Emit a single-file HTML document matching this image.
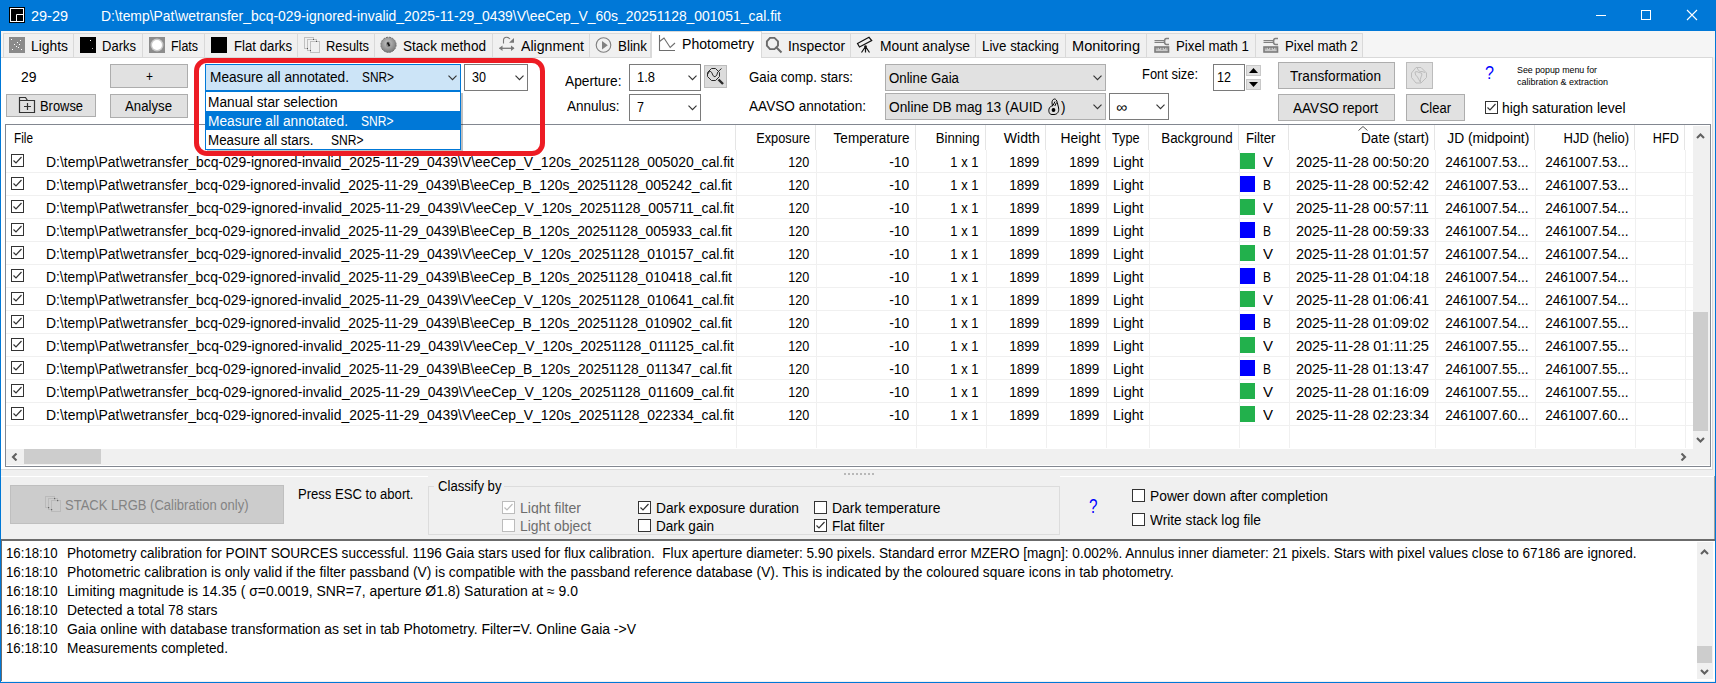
<!DOCTYPE html><html><head><meta charset="utf-8"><style>
html,body{margin:0;padding:0;}
body{width:1716px;height:683px;overflow:hidden;position:relative;background:#f0f0f0;font-family:"Liberation Sans", sans-serif;}
body>div, body>svg{position:absolute;white-space:pre;box-sizing:border-box;}
</style></head><body>
<div style="left:0px;top:0px;width:1716px;height:31px;background:#0078d7;"></div>
<svg style="left:9px;top:7px" width="16" height="16"><rect x="0" y="0" width="16" height="16" fill="#000"/><rect x="1.5" y="1.5" width="13" height="13" fill="none" stroke="#fff" stroke-width="1"/><path d="M7.5 14.5 V7.5 H14.5" fill="none" stroke="#fff" stroke-width="1"/></svg>
<div style="left:31px;top:9px;font-size:14px;line-height:14px;color:#fff;transform:scaleX(1.0332);transform-origin:left 0;">29-29</div>
<div style="left:101px;top:9px;font-size:14px;line-height:14px;color:#fff;transform:scaleX(0.9935);transform-origin:left 0;">D:\temp\Pat\wetransfer_bcq-029-ignored-invalid_2025-11-29_0439\V\eeCep_V_60s_20251128_001051_cal.fit</div>
<div style="left:1596px;top:15px;width:10px;height:1px;background:#fff;"></div>
<div style="left:1641px;top:10px;width:10px;height:10px;border:1px solid #fff;"></div>
<svg style="left:1686px;top:9px" width="12" height="12" viewBox="0 0 12 12"><path d="M1 1 L11 11 M11 1 L1 11" stroke="#fff" stroke-width="1.1"/></svg>
<div style="left:1px;top:31px;width:1714px;height:26px;background:#f5f5f5;"></div>
<div style="left:3px;top:33px;width:648px;height:24px;background:#f0f0f0;border:1px solid #d9d9d9;border-bottom:none;"></div>
<div style="left:761px;top:33px;width:602px;height:24px;background:#f0f0f0;border:1px solid #d9d9d9;border-bottom:none;"></div>
<div style="left:73px;top:33px;width:1px;height:24px;background:#d9d9d9;"></div>
<div style="left:142px;top:33px;width:1px;height:24px;background:#d9d9d9;"></div>
<div style="left:204px;top:33px;width:1px;height:24px;background:#d9d9d9;"></div>
<div style="left:297px;top:33px;width:1px;height:24px;background:#d9d9d9;"></div>
<div style="left:374px;top:33px;width:1px;height:24px;background:#d9d9d9;"></div>
<div style="left:492px;top:33px;width:1px;height:24px;background:#d9d9d9;"></div>
<div style="left:589px;top:33px;width:1px;height:24px;background:#d9d9d9;"></div>
<div style="left:850px;top:33px;width:1px;height:24px;background:#d9d9d9;"></div>
<div style="left:975px;top:33px;width:1px;height:24px;background:#d9d9d9;"></div>
<div style="left:1065px;top:33px;width:1px;height:24px;background:#d9d9d9;"></div>
<div style="left:1146px;top:33px;width:1px;height:24px;background:#d9d9d9;"></div>
<div style="left:1255px;top:33px;width:1px;height:24px;background:#d9d9d9;"></div>
<div style="left:1px;top:57px;width:1712px;height:413px;background:#fff;border:1px solid #d9d9d9;border-left:none;"></div>
<div style="left:651px;top:31px;width:111px;height:27px;background:#fff;border:1px solid #d9d9d9;border-bottom:none;"></div>
<div style="left:31px;top:39px;font-size:14px;line-height:14px;color:#000;transform:scaleX(0.9904);transform-origin:left 0;">Lights</div>
<div style="left:102px;top:39px;font-size:14px;line-height:14px;color:#000;transform:scaleX(0.9299);transform-origin:left 0;">Darks</div>
<div style="left:171px;top:39px;font-size:14px;line-height:14px;color:#000;transform:scaleX(0.8898);transform-origin:left 0;">Flats</div>
<div style="left:234px;top:39px;font-size:14px;line-height:14px;color:#000;transform:scaleX(0.9436);transform-origin:left 0;">Flat darks</div>
<div style="left:326px;top:39px;font-size:14px;line-height:14px;color:#000;transform:scaleX(0.9210);transform-origin:left 0;">Results</div>
<div style="left:403px;top:39px;font-size:14px;line-height:14px;color:#000;transform:scaleX(0.9695);transform-origin:left 0;">Stack method</div>
<div style="left:521px;top:39px;font-size:14px;line-height:14px;color:#000;transform:scaleX(1.0118);transform-origin:left 0;">Alignment</div>
<div style="left:618px;top:39px;font-size:14px;line-height:14px;color:#000;transform:scaleX(0.9552);transform-origin:left 0;">Blink</div>
<div style="left:788px;top:39px;font-size:14px;line-height:14px;color:#000;transform:scaleX(0.9897);transform-origin:left 0;">Inspector</div>
<div style="left:880px;top:39px;font-size:14px;line-height:14px;color:#000;transform:scaleX(0.9883);transform-origin:left 0;">Mount analyse</div>
<div style="left:982px;top:39px;font-size:14px;line-height:14px;color:#000;transform:scaleX(0.9514);transform-origin:left 0;">Live stacking</div>
<div style="left:1072px;top:39px;font-size:14px;line-height:14px;color:#000;transform:scaleX(1.0402);transform-origin:left 0;">Monitoring</div>
<div style="left:1176px;top:39px;font-size:14px;line-height:14px;color:#000;transform:scaleX(0.9475);transform-origin:left 0;">Pixel math 1</div>
<div style="left:1285px;top:39px;font-size:14px;line-height:14px;color:#000;transform:scaleX(0.9475);transform-origin:left 0;">Pixel math 2</div>
<div style="left:682px;top:37px;font-size:14px;line-height:14px;color:#000;transform:scaleX(1.0057);transform-origin:left 0;">Photometry</div>
<svg style="left:9px;top:37px" width="16" height="16"><rect width="16" height="16" fill="#8a8a8a"/><g fill="#fff"><rect x="2" y="2" width="1" height="1"/><rect x="11" y="3" width="1" height="1"/><rect x="8" y="5" width="1" height="1"/><rect x="5" y="7" width="1" height="1"/><rect x="10" y="7" width="1" height="1"/><rect x="7" y="9" width="1" height="1"/><rect x="3" y="12" width="1" height="1"/><rect x="12" y="12" width="1" height="1"/><rect x="9" y="10" width="1" height="1"/></g></svg>
<svg style="left:80px;top:37px" width="16" height="16"><rect width="16" height="16" fill="#000"/><rect x="10" y="3" width="1" height="1" fill="#fff"/><rect x="12" y="11" width="1" height="1" fill="#aaa"/></svg>
<svg style="left:149px;top:37px" width="16" height="16"><rect width="16" height="16" fill="#8c8c8c"/><circle cx="8" cy="8" r="6.5" fill="#c8c8c8"/><circle cx="8" cy="8" r="5" fill="#fff"/></svg>
<div style="left:211px;top:37px;width:16px;height:16px;background:#000;"></div>
<svg style="left:304px;top:37px" width="17" height="17"><g fill="#f0f0f0" stroke="#c0c0c0" stroke-width="1"><rect x="0.5" y="0.5" width="9" height="11"/><rect x="3.5" y="2.5" width="9" height="11"/><rect x="6.5" y="4.5" width="9" height="11"/></g><g fill="#555"><rect x="9" y="2" width="1" height="1"/><rect x="12" y="4" width="1" height="1"/><rect x="3" y="11" width="1" height="1"/><rect x="6" y="13" width="1" height="1"/></g></svg>
<svg style="left:380px;top:36px" width="17" height="17"><defs><radialGradient id="gs" cx="0.45" cy="0.4" r="0.6"><stop offset="0" stop-color="#c8c8c8"/><stop offset="1" stop-color="#7a7a7a"/></radialGradient></defs><circle cx="8.5" cy="8.8" r="7.6" fill="url(#gs)" stroke="#6a6a6a" stroke-width="1" stroke-dasharray="2 1"/><ellipse cx="8.3" cy="8.3" rx="2.2" ry="2.8" fill="#888"/><path d="M7.5 6.5 L9.5 10" stroke="#111" stroke-width="1.6"/></svg>
<svg style="left:498px;top:36px" width="17" height="17" fill="none" stroke="#777" stroke-width="1.1"><path d="M5.5 7.5 V4.5 Q5.5 1.3 8.5 1.3 Q10.5 1.3 12 3"/><path d="M11 6.7 L16 6.7 L16 2 Z" fill="#777" stroke="none"/><path d="M1.5 12.3 H16" stroke-width="1.3"/><path d="M1 12.3 L4.5 9.5 L4.5 15 Z M16.5 12.3 L13 9.5 L13 15 Z" fill="#777" stroke="none"/></svg>
<svg style="left:595px;top:36px" width="17" height="17"><circle cx="8.5" cy="9" r="7.3" fill="none" stroke="#7e7e7e" stroke-width="1.1"/><path d="M7 5 L12.8 9.3 L7 13.5 Z" fill="#808080"/></svg>
<svg style="left:658px;top:34px" width="18" height="18" fill="none" stroke="#6e6e6e" stroke-width="1.1"><path d="M1.5 1 V16.5 H17"/><path d="M1.5 7.5 L6 4 L12.2 13.5 L17 9"/></svg>
<svg style="left:765px;top:36px" width="18" height="18" fill="none" stroke="#6a6a6a" stroke-width="1.9"><path d="M5 1.9 H9.5 L13 5.4 V9.6 L9.5 13.1 H5 L1.9 9.6 V5.4 Z"/><path d="M11.5 11.5 L16.5 16.5" stroke-width="2"/></svg>
<svg style="left:856px;top:36px" width="18" height="18" fill="none" stroke="#111" stroke-width="1.2"><path d="M1.5 7.5 L13 1.3 L15.7 4.5 L3.5 11 Z"/><path d="M9.5 10 V16.5 M9.5 10.5 L5.5 16.5 M9.5 10.5 L13.5 16.5"/><circle cx="9.5" cy="10.5" r="1.3" fill="#111" stroke="none"/></svg>
<svg style="left:1154px;top:37px" width="17" height="16"><path d="M0.5 3.6 H10.5 M0.5 5.5 H10.5" stroke="#808080" stroke-width="1.2"/><path d="M15 1.5 H12.5 Q10.5 1.5 10.5 4.5 Q10.5 7.5 12.5 7.5 H15" fill="none" stroke="#808080" stroke-width="1.6"/><rect x="1" y="10" width="13.5" height="5" fill="#c8c8c8" stroke="#7c7c7c" stroke-width="1.6"/><path d="M3 10 V12.5 M5.5 10 V12 M8 10 V13 M10.5 10 V12 M13 10 V12.5" stroke="#7c7c7c" stroke-width="0.9"/></svg>
<svg style="left:1263px;top:37px" width="17" height="16"><path d="M0.5 3.6 H10.5 M0.5 5.5 H10.5" stroke="#808080" stroke-width="1.2"/><path d="M15 1.5 H12.5 Q10.5 1.5 10.5 4.5 Q10.5 7.5 12.5 7.5 H15" fill="none" stroke="#808080" stroke-width="1.6"/><rect x="1" y="10" width="13.5" height="5" fill="#c8c8c8" stroke="#7c7c7c" stroke-width="1.6"/><path d="M3 10 V12.5 M5.5 10 V12 M8 10 V13 M10.5 10 V12 M13 10 V12.5" stroke="#7c7c7c" stroke-width="0.9"/></svg>
<div style="left:21px;top:70px;font-size:14px;line-height:14px;color:#000;transform:scaleX(0.9950);transform-origin:left 0;">29</div>
<div style="left:110px;top:64px;width:78px;height:24px;background:#e1e1e1;border:1px solid #adadad;"></div>
<div style="left:146px;top:69px;font-size:14px;line-height:14px;color:#000;transform:scaleX(0.8550);transform-origin:left 0;">+</div>
<div style="left:6px;top:94px;width:90px;height:23px;background:#e1e1e1;border:1px solid #adadad;"></div>
<svg style="left:18px;top:96px" width="18" height="18" fill="none" stroke="#333" stroke-width="1.2"><path d="M1.5 4.5 H16.5 V16.5 H1.5 Z M1.5 4.5 V1.5 H7.5 L9.5 4.5"/><path d="M9.5 7 V14 M6 10.5 H13"/></svg>
<div style="left:40px;top:99px;font-size:14px;line-height:14px;color:#000;transform:scaleX(0.9210);transform-origin:left 0;">Browse</div>
<div style="left:110px;top:94px;width:78px;height:24px;background:#e1e1e1;border:1px solid #adadad;"></div>
<div style="left:125px;top:99px;font-size:14px;line-height:14px;color:#000;transform:scaleX(0.9435);transform-origin:left 0;">Analyse</div>
<div style="left:464px;top:64px;width:64px;height:27px;background:#fff;border:1px solid #7a7a7a;"></div>
<div style="left:472px;top:70px;font-size:14px;line-height:14px;color:#000;transform:scaleX(0.8987);transform-origin:left 0;">30</div>
<svg style="left:515px;top:75px" width="9" height="6"><path d="M0.5 0.7 L4.5 4.7 L8.5 0.7" fill="none" stroke="#333" stroke-width="1.15"/></svg>
<div style="left:565px;top:74px;font-size:14px;line-height:14px;color:#000;transform:scaleX(0.9810);transform-origin:left 0;">Aperture:</div>
<div style="left:567px;top:99px;font-size:14px;line-height:14px;color:#000;transform:scaleX(0.9636);transform-origin:left 0;">Annulus:</div>
<div style="left:629px;top:64px;width:72px;height:27px;background:#fff;border:1px solid #7a7a7a;"></div>
<div style="left:637px;top:70px;font-size:14px;line-height:14px;color:#000;transform:scaleX(0.9246);transform-origin:left 0;">1.8</div>
<svg style="left:688px;top:75px" width="9" height="6"><path d="M0.5 0.7 L4.5 4.7 L8.5 0.7" fill="none" stroke="#333" stroke-width="1.15"/></svg>
<div style="left:629px;top:94px;width:72px;height:27px;background:#fff;border:1px solid #7a7a7a;"></div>
<div style="left:637px;top:100px;font-size:14px;line-height:14px;color:#000;transform:scaleX(0.8978);transform-origin:left 0;">7</div>
<svg style="left:688px;top:105px" width="9" height="6"><path d="M0.5 0.7 L4.5 4.7 L8.5 0.7" fill="none" stroke="#333" stroke-width="1.15"/></svg>
<div style="left:704px;top:65px;width:23px;height:23px;background:#dcdcdc;border:1px solid #bcbcbc;"></div>
<svg style="left:706px;top:67px" width="19" height="19" fill="none" stroke="#2a2a2a" stroke-width="1"><path d="M5.5 1.5 H9.5 L13.5 5.5 V9.5 L9.5 13.5 H5.5 L1.5 9.5 V5.5 Z"/><path d="M1.8 7 Q3 3.5 4.8 4.5 Q6 5.5 6.8 8 Q7.8 10.5 9.5 9.5 Q11 8.5 11.8 5 L15.5 1.5"/><path d="M12.5 12.5 L17 17" stroke-width="2.4"/></svg>
<div style="left:749px;top:70px;font-size:14px;line-height:14px;color:#000;transform:scaleX(0.9480);transform-origin:left 0;">Gaia comp. stars:</div>
<div style="left:749px;top:99px;font-size:14px;line-height:14px;color:#000;transform:scaleX(0.9720);transform-origin:left 0;">AAVSO annotation:</div>
<div style="left:885px;top:64px;width:221px;height:27px;background:#e1e1e1;border:1px solid #adadad;"></div>
<div style="left:889px;top:71px;font-size:14px;line-height:14px;color:#000;transform:scaleX(0.9467);transform-origin:left 0;">Online Gaia</div>
<svg style="left:1093px;top:75px" width="9" height="6"><path d="M0.5 0.7 L4.5 4.7 L8.5 0.7" fill="none" stroke="#333" stroke-width="1.15"/></svg>
<div style="left:885px;top:93px;width:221px;height:27px;background:#e1e1e1;border:1px solid #adadad;"></div>
<div style="left:889px;top:100px;font-size:14px;line-height:14px;color:#000;transform:scaleX(0.9814);transform-origin:left 0;">Online DB mag 13 (AUID</div>
<svg style="left:1048px;top:98px" width="12" height="18" fill="none" stroke="#000" stroke-width="1"><path d="M4 16.5 C1 16.5 0.5 13 1 11 C1.5 9 3 8 4.5 8 L4 5 C3.8 3 5 1 6.5 1 C8 1 8.8 2.5 9.3 4.5 L10.6 10 C11.2 13.5 9.5 16.5 6 16.5 Z"/><path d="M5 7.5 L7 3.5 M6.8 8 L8.5 4.5"/><circle cx="5.5" cy="12" r="1.9" fill="#000" stroke="none"/></svg>
<div style="left:1060.5px;top:100px;font-size:14px;line-height:14px;color:#000;transform:scaleX(0.9632);transform-origin:left 0;">)</div>
<svg style="left:1093px;top:104px" width="9" height="6"><path d="M0.5 0.7 L4.5 4.7 L8.5 0.7" fill="none" stroke="#333" stroke-width="1.15"/></svg>
<div style="left:1109px;top:93px;width:60px;height:27px;background:#fff;border:1px solid #7a7a7a;"></div>
<div style="left:1116px;top:100px;font-size:14px;line-height:14px;color:#000;transform:scaleX(1.1017);transform-origin:left 0;">∞</div>
<svg style="left:1156px;top:104px" width="9" height="6"><path d="M0.5 0.7 L4.5 4.7 L8.5 0.7" fill="none" stroke="#333" stroke-width="1.15"/></svg>
<div style="left:1142px;top:67px;font-size:14px;line-height:14px;color:#000;transform:scaleX(0.9225);transform-origin:left 0;">Font size:</div>
<div style="left:1213px;top:64px;width:32px;height:27px;background:#fff;border:1px solid #7a7a7a;"></div>
<div style="left:1217px;top:70px;font-size:14px;line-height:14px;color:#000;transform:scaleX(0.8987);transform-origin:left 0;">12</div>
<div style="left:1246px;top:65px;width:15px;height:11px;background:#e1e1e1;border:1px solid #c8c8c8;"></div>
<div style="left:1246px;top:79px;width:15px;height:11px;background:#e1e1e1;border:1px solid #c8c8c8;"></div>
<svg style="left:1249px;top:68px" width="9" height="5"><path d="M0 5 L4.5 0 L9 5 Z" fill="#000"/></svg>
<svg style="left:1249px;top:82px" width="9" height="5"><path d="M0 0 L4.5 5 L9 0 Z" fill="#000"/></svg>
<div style="left:1278px;top:62px;width:117px;height:27px;background:#e1e1e1;border:1px solid #adadad;"></div>
<div style="left:1290px;top:69px;font-size:14px;line-height:14px;color:#000;transform:scaleX(0.9720);transform-origin:left 0;">Transformation</div>
<div style="left:1406px;top:62px;width:27px;height:27px;background:#e1e1e1;border:1px solid #bcbcbc;"></div>
<svg style="left:1410px;top:66px" width="18" height="18" fill="none" stroke="#bdbdbd" stroke-width="1"><path d="M6 1.5 H11 L16.5 7 V11.5 L11 17 H6 L1.5 11.5 V7 Z"/><path d="M7 1.5 L8.5 4.5 Q10 6 12 5.5 L15 6.5 M5 6 Q7 5 9 6.5 L11.5 7 Q12.5 9 11 11 Q10 13 10.5 16.5 Q8.5 13 7.5 11 Q5 9.5 5 6"/></svg>
<div style="left:1278px;top:94px;width:117px;height:27px;background:#e1e1e1;border:1px solid #adadad;"></div>
<div style="left:1293px;top:101px;font-size:14px;line-height:14px;color:#000;transform:scaleX(0.9695);transform-origin:left 0;">AAVSO report</div>
<div style="left:1406px;top:94px;width:59px;height:27px;background:#e1e1e1;border:1px solid #adadad;"></div>
<div style="left:1420px;top:101px;font-size:14px;line-height:14px;color:#000;transform:scaleX(0.9262);transform-origin:left 0;">Clear</div>
<div style="left:1485px;top:63px;font-size:19px;line-height:19px;color:#0000ff;transform:scaleX(0.8508);transform-origin:left 0;">?</div>
<div style="left:1517px;top:65.3px;font-size:9.5px;line-height:9.5px;color:#000;transform:scaleX(0.9292);transform-origin:left 0;">See popup menu for</div>
<div style="left:1517px;top:77.3px;font-size:9.5px;line-height:9.5px;color:#000;transform:scaleX(0.9468);transform-origin:left 0;">calibration &amp; extraction</div>
<svg style="left:1485px;top:101px" width="13" height="13"><rect x="0.5" y="0.5" width="12" height="12" fill="#fff" stroke="#333" stroke-width="1"/><path d="M2.5 6.5 L5 9 L10.5 3" fill="none" stroke="#333" stroke-width="1.2"/></svg>
<div style="left:1502px;top:101px;font-size:14px;line-height:14px;color:#000;transform:scaleX(0.9917);transform-origin:left 0;">high saturation level</div>
<div style="left:5px;top:124px;width:1706px;height:343px;background:#fff;border:1px solid #828790;"></div>
<div style="left:735px;top:125px;width:1px;height:25px;background:#e5e5e5;"></div>
<div style="left:815px;top:125px;width:1px;height:25px;background:#e5e5e5;"></div>
<div style="left:915px;top:125px;width:1px;height:25px;background:#e5e5e5;"></div>
<div style="left:985px;top:125px;width:1px;height:25px;background:#e5e5e5;"></div>
<div style="left:1045px;top:125px;width:1px;height:25px;background:#e5e5e5;"></div>
<div style="left:1105px;top:125px;width:1px;height:25px;background:#e5e5e5;"></div>
<div style="left:1148px;top:125px;width:1px;height:25px;background:#e5e5e5;"></div>
<div style="left:1238px;top:125px;width:1px;height:25px;background:#e5e5e5;"></div>
<div style="left:1288px;top:125px;width:1px;height:25px;background:#e5e5e5;"></div>
<div style="left:1434px;top:125px;width:1px;height:25px;background:#e5e5e5;"></div>
<div style="left:1534px;top:125px;width:1px;height:25px;background:#e5e5e5;"></div>
<div style="left:1634px;top:125px;width:1px;height:25px;background:#e5e5e5;"></div>
<div style="left:1684px;top:125px;width:1px;height:25px;background:#e5e5e5;"></div>
<div style="left:14px;top:131px;font-size:14px;line-height:14px;color:#000;transform:scaleX(0.8421);transform-origin:left 0;">File</div>
<div style="right:906.0px;top:131px;font-size:14px;line-height:14px;color:#000;transform:scaleX(0.9128);transform-origin:right 0;">Exposure</div>
<div style="right:806.0px;top:131px;font-size:14px;line-height:14px;color:#000;transform:scaleX(0.9670);transform-origin:right 0;">Temperature</div>
<div style="right:736.5px;top:131px;font-size:14px;line-height:14px;color:#000;transform:scaleX(0.9421);transform-origin:right 0;">Binning</div>
<div style="right:676.0px;top:131px;font-size:14px;line-height:14px;color:#000;transform:scaleX(1.0057);transform-origin:right 0;">Width</div>
<div style="right:616.0px;top:131px;font-size:14px;line-height:14px;color:#000;transform:scaleX(0.9884);transform-origin:right 0;">Height</div>
<div style="left:1112px;top:131px;font-size:14px;line-height:14px;color:#000;transform:scaleX(0.9058);transform-origin:left 0;">Type</div>
<div style="right:483.5px;top:131px;font-size:14px;line-height:14px;color:#000;transform:scaleX(0.9569);transform-origin:right 0;">Background</div>
<div style="left:1245.5px;top:131px;font-size:14px;line-height:14px;color:#000;transform:scaleX(0.9478);transform-origin:left 0;">Filter</div>
<div style="right:287.0px;top:131px;font-size:14px;line-height:14px;color:#000;transform:scaleX(0.9712);transform-origin:right 0;">Date (start)</div>
<div style="right:186.79999999999995px;top:131px;font-size:14px;line-height:14px;color:#000;transform:scaleX(0.9850);transform-origin:right 0;">JD (midpoint)</div>
<div style="right:86.79999999999995px;top:131px;font-size:14px;line-height:14px;color:#000;transform:scaleX(0.9341);transform-origin:right 0;">HJD (helio)</div>
<div style="right:37.200000000000045px;top:131px;font-size:14px;line-height:14px;color:#000;transform:scaleX(0.9034);transform-origin:right 0;">HFD</div>
<svg style="left:1358px;top:126px" width="10" height="5"><path d="M0.5 4.5 L5 0.5 L9.5 4.5" fill="none" stroke="#555" stroke-width="1"/></svg>
<div style="left:6px;top:172px;width:1687px;height:1px;background:#f0f0f0;"></div>
<svg style="left:11px;top:154px" width="13" height="13"><rect x="0.5" y="0.5" width="12" height="12" fill="#fff" stroke="#333" stroke-width="1"/><path d="M2.5 6.5 L5 9 L10.5 3" fill="none" stroke="#333" stroke-width="1.2"/></svg>
<div style="left:45.5px;top:155px;font-size:14px;line-height:14px;color:#000;transform:scaleX(0.9939);transform-origin:left 0;">D:\temp\Pat\wetransfer_bcq-029-ignored-invalid_2025-11-29_0439\V\eeCep_V_120s_20251128_005020_cal.fit</div>
<div style="right:907px;top:155px;font-size:14px;line-height:14px;color:#000;transform:scaleX(0.8990);transform-origin:right 0;">120</div>
<div style="right:806.5px;top:155px;font-size:14px;line-height:14px;color:#000;transform:scaleX(0.9884);transform-origin:right 0;">-10</div>
<div style="right:737.5px;top:155px;font-size:14px;line-height:14px;color:#000;transform:scaleX(0.9223);transform-origin:right 0;">1 x 1</div>
<div style="right:676.5px;top:155px;font-size:14px;line-height:14px;color:#000;transform:scaleX(0.9629);transform-origin:right 0;">1899</div>
<div style="right:616.5px;top:155px;font-size:14px;line-height:14px;color:#000;transform:scaleX(0.9629);transform-origin:right 0;">1899</div>
<div style="left:1112.5px;top:155px;font-size:14px;line-height:14px;color:#000;transform:scaleX(1.0046);transform-origin:left 0;">Light</div>
<div style="left:1240px;top:153px;width:15px;height:16px;background:#22b14c;"></div>
<div style="left:1263px;top:155px;font-size:14px;line-height:14px;color:#000;transform:scaleX(1.0702);transform-origin:left 0;">V</div>
<div style="right:287px;top:155px;font-size:14px;line-height:14px;color:#000;transform:scaleX(1.0313);transform-origin:right 0;">2025-11-28 00:50:20</div>
<div style="right:187px;top:155px;font-size:14px;line-height:14px;color:#000;transform:scaleX(0.9750);transform-origin:right 0;">2461007.53...</div>
<div style="right:87px;top:155px;font-size:14px;line-height:14px;color:#000;transform:scaleX(0.9750);transform-origin:right 0;">2461007.53...</div>
<div style="left:6px;top:195px;width:1687px;height:1px;background:#f0f0f0;"></div>
<svg style="left:11px;top:177px" width="13" height="13"><rect x="0.5" y="0.5" width="12" height="12" fill="#fff" stroke="#333" stroke-width="1"/><path d="M2.5 6.5 L5 9 L10.5 3" fill="none" stroke="#333" stroke-width="1.2"/></svg>
<div style="left:45.5px;top:178px;font-size:14px;line-height:14px;color:#000;transform:scaleX(0.9910);transform-origin:left 0;">D:\temp\Pat\wetransfer_bcq-029-ignored-invalid_2025-11-29_0439\B\eeCep_B_120s_20251128_005242_cal.fit</div>
<div style="right:907px;top:178px;font-size:14px;line-height:14px;color:#000;transform:scaleX(0.8990);transform-origin:right 0;">120</div>
<div style="right:806.5px;top:178px;font-size:14px;line-height:14px;color:#000;transform:scaleX(0.9884);transform-origin:right 0;">-10</div>
<div style="right:737.5px;top:178px;font-size:14px;line-height:14px;color:#000;transform:scaleX(0.9223);transform-origin:right 0;">1 x 1</div>
<div style="right:676.5px;top:178px;font-size:14px;line-height:14px;color:#000;transform:scaleX(0.9629);transform-origin:right 0;">1899</div>
<div style="right:616.5px;top:178px;font-size:14px;line-height:14px;color:#000;transform:scaleX(0.9629);transform-origin:right 0;">1899</div>
<div style="left:1112.5px;top:178px;font-size:14px;line-height:14px;color:#000;transform:scaleX(1.0046);transform-origin:left 0;">Light</div>
<div style="left:1240px;top:176px;width:15px;height:16px;background:#0000ff;"></div>
<div style="left:1263px;top:178px;font-size:14px;line-height:14px;color:#000;transform:scaleX(0.8562);transform-origin:left 0;">B</div>
<div style="right:287px;top:178px;font-size:14px;line-height:14px;color:#000;transform:scaleX(1.0313);transform-origin:right 0;">2025-11-28 00:52:42</div>
<div style="right:187px;top:178px;font-size:14px;line-height:14px;color:#000;transform:scaleX(0.9750);transform-origin:right 0;">2461007.53...</div>
<div style="right:87px;top:178px;font-size:14px;line-height:14px;color:#000;transform:scaleX(0.9750);transform-origin:right 0;">2461007.53...</div>
<div style="left:6px;top:218px;width:1687px;height:1px;background:#f0f0f0;"></div>
<svg style="left:11px;top:200px" width="13" height="13"><rect x="0.5" y="0.5" width="12" height="12" fill="#fff" stroke="#333" stroke-width="1"/><path d="M2.5 6.5 L5 9 L10.5 3" fill="none" stroke="#333" stroke-width="1.2"/></svg>
<div style="left:45.5px;top:201px;font-size:14px;line-height:14px;color:#000;transform:scaleX(0.9954);transform-origin:left 0;">D:\temp\Pat\wetransfer_bcq-029-ignored-invalid_2025-11-29_0439\V\eeCep_V_120s_20251128_005711_cal.fit</div>
<div style="right:907px;top:201px;font-size:14px;line-height:14px;color:#000;transform:scaleX(0.8990);transform-origin:right 0;">120</div>
<div style="right:806.5px;top:201px;font-size:14px;line-height:14px;color:#000;transform:scaleX(0.9884);transform-origin:right 0;">-10</div>
<div style="right:737.5px;top:201px;font-size:14px;line-height:14px;color:#000;transform:scaleX(0.9223);transform-origin:right 0;">1 x 1</div>
<div style="right:676.5px;top:201px;font-size:14px;line-height:14px;color:#000;transform:scaleX(0.9629);transform-origin:right 0;">1899</div>
<div style="right:616.5px;top:201px;font-size:14px;line-height:14px;color:#000;transform:scaleX(0.9629);transform-origin:right 0;">1899</div>
<div style="left:1112.5px;top:201px;font-size:14px;line-height:14px;color:#000;transform:scaleX(1.0046);transform-origin:left 0;">Light</div>
<div style="left:1240px;top:199px;width:15px;height:16px;background:#22b14c;"></div>
<div style="left:1263px;top:201px;font-size:14px;line-height:14px;color:#000;transform:scaleX(1.0702);transform-origin:left 0;">V</div>
<div style="right:287px;top:201px;font-size:14px;line-height:14px;color:#000;transform:scaleX(1.0397);transform-origin:right 0;">2025-11-28 00:57:11</div>
<div style="right:187px;top:201px;font-size:14px;line-height:14px;color:#000;transform:scaleX(0.9750);transform-origin:right 0;">2461007.54...</div>
<div style="right:87px;top:201px;font-size:14px;line-height:14px;color:#000;transform:scaleX(0.9750);transform-origin:right 0;">2461007.54...</div>
<div style="left:6px;top:241px;width:1687px;height:1px;background:#f0f0f0;"></div>
<svg style="left:11px;top:223px" width="13" height="13"><rect x="0.5" y="0.5" width="12" height="12" fill="#fff" stroke="#333" stroke-width="1"/><path d="M2.5 6.5 L5 9 L10.5 3" fill="none" stroke="#333" stroke-width="1.2"/></svg>
<div style="left:45.5px;top:224px;font-size:14px;line-height:14px;color:#000;transform:scaleX(0.9910);transform-origin:left 0;">D:\temp\Pat\wetransfer_bcq-029-ignored-invalid_2025-11-29_0439\B\eeCep_B_120s_20251128_005933_cal.fit</div>
<div style="right:907px;top:224px;font-size:14px;line-height:14px;color:#000;transform:scaleX(0.8990);transform-origin:right 0;">120</div>
<div style="right:806.5px;top:224px;font-size:14px;line-height:14px;color:#000;transform:scaleX(0.9884);transform-origin:right 0;">-10</div>
<div style="right:737.5px;top:224px;font-size:14px;line-height:14px;color:#000;transform:scaleX(0.9223);transform-origin:right 0;">1 x 1</div>
<div style="right:676.5px;top:224px;font-size:14px;line-height:14px;color:#000;transform:scaleX(0.9629);transform-origin:right 0;">1899</div>
<div style="right:616.5px;top:224px;font-size:14px;line-height:14px;color:#000;transform:scaleX(0.9629);transform-origin:right 0;">1899</div>
<div style="left:1112.5px;top:224px;font-size:14px;line-height:14px;color:#000;transform:scaleX(1.0046);transform-origin:left 0;">Light</div>
<div style="left:1240px;top:222px;width:15px;height:16px;background:#0000ff;"></div>
<div style="left:1263px;top:224px;font-size:14px;line-height:14px;color:#000;transform:scaleX(0.8562);transform-origin:left 0;">B</div>
<div style="right:287px;top:224px;font-size:14px;line-height:14px;color:#000;transform:scaleX(1.0313);transform-origin:right 0;">2025-11-28 00:59:33</div>
<div style="right:187px;top:224px;font-size:14px;line-height:14px;color:#000;transform:scaleX(0.9750);transform-origin:right 0;">2461007.54...</div>
<div style="right:87px;top:224px;font-size:14px;line-height:14px;color:#000;transform:scaleX(0.9750);transform-origin:right 0;">2461007.54...</div>
<div style="left:6px;top:264px;width:1687px;height:1px;background:#f0f0f0;"></div>
<svg style="left:11px;top:246px" width="13" height="13"><rect x="0.5" y="0.5" width="12" height="12" fill="#fff" stroke="#333" stroke-width="1"/><path d="M2.5 6.5 L5 9 L10.5 3" fill="none" stroke="#333" stroke-width="1.2"/></svg>
<div style="left:45.5px;top:247px;font-size:14px;line-height:14px;color:#000;transform:scaleX(0.9939);transform-origin:left 0;">D:\temp\Pat\wetransfer_bcq-029-ignored-invalid_2025-11-29_0439\V\eeCep_V_120s_20251128_010157_cal.fit</div>
<div style="right:907px;top:247px;font-size:14px;line-height:14px;color:#000;transform:scaleX(0.8990);transform-origin:right 0;">120</div>
<div style="right:806.5px;top:247px;font-size:14px;line-height:14px;color:#000;transform:scaleX(0.9884);transform-origin:right 0;">-10</div>
<div style="right:737.5px;top:247px;font-size:14px;line-height:14px;color:#000;transform:scaleX(0.9223);transform-origin:right 0;">1 x 1</div>
<div style="right:676.5px;top:247px;font-size:14px;line-height:14px;color:#000;transform:scaleX(0.9629);transform-origin:right 0;">1899</div>
<div style="right:616.5px;top:247px;font-size:14px;line-height:14px;color:#000;transform:scaleX(0.9629);transform-origin:right 0;">1899</div>
<div style="left:1112.5px;top:247px;font-size:14px;line-height:14px;color:#000;transform:scaleX(1.0046);transform-origin:left 0;">Light</div>
<div style="left:1240px;top:245px;width:15px;height:16px;background:#22b14c;"></div>
<div style="left:1263px;top:247px;font-size:14px;line-height:14px;color:#000;transform:scaleX(1.0702);transform-origin:left 0;">V</div>
<div style="right:287px;top:247px;font-size:14px;line-height:14px;color:#000;transform:scaleX(1.0313);transform-origin:right 0;">2025-11-28 01:01:57</div>
<div style="right:187px;top:247px;font-size:14px;line-height:14px;color:#000;transform:scaleX(0.9750);transform-origin:right 0;">2461007.54...</div>
<div style="right:87px;top:247px;font-size:14px;line-height:14px;color:#000;transform:scaleX(0.9750);transform-origin:right 0;">2461007.54...</div>
<div style="left:6px;top:287px;width:1687px;height:1px;background:#f0f0f0;"></div>
<svg style="left:11px;top:269px" width="13" height="13"><rect x="0.5" y="0.5" width="12" height="12" fill="#fff" stroke="#333" stroke-width="1"/><path d="M2.5 6.5 L5 9 L10.5 3" fill="none" stroke="#333" stroke-width="1.2"/></svg>
<div style="left:45.5px;top:270px;font-size:14px;line-height:14px;color:#000;transform:scaleX(0.9910);transform-origin:left 0;">D:\temp\Pat\wetransfer_bcq-029-ignored-invalid_2025-11-29_0439\B\eeCep_B_120s_20251128_010418_cal.fit</div>
<div style="right:907px;top:270px;font-size:14px;line-height:14px;color:#000;transform:scaleX(0.8990);transform-origin:right 0;">120</div>
<div style="right:806.5px;top:270px;font-size:14px;line-height:14px;color:#000;transform:scaleX(0.9884);transform-origin:right 0;">-10</div>
<div style="right:737.5px;top:270px;font-size:14px;line-height:14px;color:#000;transform:scaleX(0.9223);transform-origin:right 0;">1 x 1</div>
<div style="right:676.5px;top:270px;font-size:14px;line-height:14px;color:#000;transform:scaleX(0.9629);transform-origin:right 0;">1899</div>
<div style="right:616.5px;top:270px;font-size:14px;line-height:14px;color:#000;transform:scaleX(0.9629);transform-origin:right 0;">1899</div>
<div style="left:1112.5px;top:270px;font-size:14px;line-height:14px;color:#000;transform:scaleX(1.0046);transform-origin:left 0;">Light</div>
<div style="left:1240px;top:268px;width:15px;height:16px;background:#0000ff;"></div>
<div style="left:1263px;top:270px;font-size:14px;line-height:14px;color:#000;transform:scaleX(0.8562);transform-origin:left 0;">B</div>
<div style="right:287px;top:270px;font-size:14px;line-height:14px;color:#000;transform:scaleX(1.0313);transform-origin:right 0;">2025-11-28 01:04:18</div>
<div style="right:187px;top:270px;font-size:14px;line-height:14px;color:#000;transform:scaleX(0.9750);transform-origin:right 0;">2461007.54...</div>
<div style="right:87px;top:270px;font-size:14px;line-height:14px;color:#000;transform:scaleX(0.9750);transform-origin:right 0;">2461007.54...</div>
<div style="left:6px;top:310px;width:1687px;height:1px;background:#f0f0f0;"></div>
<svg style="left:11px;top:292px" width="13" height="13"><rect x="0.5" y="0.5" width="12" height="12" fill="#fff" stroke="#333" stroke-width="1"/><path d="M2.5 6.5 L5 9 L10.5 3" fill="none" stroke="#333" stroke-width="1.2"/></svg>
<div style="left:45.5px;top:293px;font-size:14px;line-height:14px;color:#000;transform:scaleX(0.9939);transform-origin:left 0;">D:\temp\Pat\wetransfer_bcq-029-ignored-invalid_2025-11-29_0439\V\eeCep_V_120s_20251128_010641_cal.fit</div>
<div style="right:907px;top:293px;font-size:14px;line-height:14px;color:#000;transform:scaleX(0.8990);transform-origin:right 0;">120</div>
<div style="right:806.5px;top:293px;font-size:14px;line-height:14px;color:#000;transform:scaleX(0.9884);transform-origin:right 0;">-10</div>
<div style="right:737.5px;top:293px;font-size:14px;line-height:14px;color:#000;transform:scaleX(0.9223);transform-origin:right 0;">1 x 1</div>
<div style="right:676.5px;top:293px;font-size:14px;line-height:14px;color:#000;transform:scaleX(0.9629);transform-origin:right 0;">1899</div>
<div style="right:616.5px;top:293px;font-size:14px;line-height:14px;color:#000;transform:scaleX(0.9629);transform-origin:right 0;">1899</div>
<div style="left:1112.5px;top:293px;font-size:14px;line-height:14px;color:#000;transform:scaleX(1.0046);transform-origin:left 0;">Light</div>
<div style="left:1240px;top:291px;width:15px;height:16px;background:#22b14c;"></div>
<div style="left:1263px;top:293px;font-size:14px;line-height:14px;color:#000;transform:scaleX(1.0702);transform-origin:left 0;">V</div>
<div style="right:287px;top:293px;font-size:14px;line-height:14px;color:#000;transform:scaleX(1.0313);transform-origin:right 0;">2025-11-28 01:06:41</div>
<div style="right:187px;top:293px;font-size:14px;line-height:14px;color:#000;transform:scaleX(0.9750);transform-origin:right 0;">2461007.54...</div>
<div style="right:87px;top:293px;font-size:14px;line-height:14px;color:#000;transform:scaleX(0.9750);transform-origin:right 0;">2461007.54...</div>
<div style="left:6px;top:333px;width:1687px;height:1px;background:#f0f0f0;"></div>
<svg style="left:11px;top:315px" width="13" height="13"><rect x="0.5" y="0.5" width="12" height="12" fill="#fff" stroke="#333" stroke-width="1"/><path d="M2.5 6.5 L5 9 L10.5 3" fill="none" stroke="#333" stroke-width="1.2"/></svg>
<div style="left:45.5px;top:316px;font-size:14px;line-height:14px;color:#000;transform:scaleX(0.9910);transform-origin:left 0;">D:\temp\Pat\wetransfer_bcq-029-ignored-invalid_2025-11-29_0439\B\eeCep_B_120s_20251128_010902_cal.fit</div>
<div style="right:907px;top:316px;font-size:14px;line-height:14px;color:#000;transform:scaleX(0.8990);transform-origin:right 0;">120</div>
<div style="right:806.5px;top:316px;font-size:14px;line-height:14px;color:#000;transform:scaleX(0.9884);transform-origin:right 0;">-10</div>
<div style="right:737.5px;top:316px;font-size:14px;line-height:14px;color:#000;transform:scaleX(0.9223);transform-origin:right 0;">1 x 1</div>
<div style="right:676.5px;top:316px;font-size:14px;line-height:14px;color:#000;transform:scaleX(0.9629);transform-origin:right 0;">1899</div>
<div style="right:616.5px;top:316px;font-size:14px;line-height:14px;color:#000;transform:scaleX(0.9629);transform-origin:right 0;">1899</div>
<div style="left:1112.5px;top:316px;font-size:14px;line-height:14px;color:#000;transform:scaleX(1.0046);transform-origin:left 0;">Light</div>
<div style="left:1240px;top:314px;width:15px;height:16px;background:#0000ff;"></div>
<div style="left:1263px;top:316px;font-size:14px;line-height:14px;color:#000;transform:scaleX(0.8562);transform-origin:left 0;">B</div>
<div style="right:287px;top:316px;font-size:14px;line-height:14px;color:#000;transform:scaleX(1.0313);transform-origin:right 0;">2025-11-28 01:09:02</div>
<div style="right:187px;top:316px;font-size:14px;line-height:14px;color:#000;transform:scaleX(0.9750);transform-origin:right 0;">2461007.54...</div>
<div style="right:87px;top:316px;font-size:14px;line-height:14px;color:#000;transform:scaleX(0.9750);transform-origin:right 0;">2461007.55...</div>
<div style="left:6px;top:356px;width:1687px;height:1px;background:#f0f0f0;"></div>
<svg style="left:11px;top:338px" width="13" height="13"><rect x="0.5" y="0.5" width="12" height="12" fill="#fff" stroke="#333" stroke-width="1"/><path d="M2.5 6.5 L5 9 L10.5 3" fill="none" stroke="#333" stroke-width="1.2"/></svg>
<div style="left:45.5px;top:339px;font-size:14px;line-height:14px;color:#000;transform:scaleX(0.9969);transform-origin:left 0;">D:\temp\Pat\wetransfer_bcq-029-ignored-invalid_2025-11-29_0439\V\eeCep_V_120s_20251128_011125_cal.fit</div>
<div style="right:907px;top:339px;font-size:14px;line-height:14px;color:#000;transform:scaleX(0.8990);transform-origin:right 0;">120</div>
<div style="right:806.5px;top:339px;font-size:14px;line-height:14px;color:#000;transform:scaleX(0.9884);transform-origin:right 0;">-10</div>
<div style="right:737.5px;top:339px;font-size:14px;line-height:14px;color:#000;transform:scaleX(0.9223);transform-origin:right 0;">1 x 1</div>
<div style="right:676.5px;top:339px;font-size:14px;line-height:14px;color:#000;transform:scaleX(0.9629);transform-origin:right 0;">1899</div>
<div style="right:616.5px;top:339px;font-size:14px;line-height:14px;color:#000;transform:scaleX(0.9629);transform-origin:right 0;">1899</div>
<div style="left:1112.5px;top:339px;font-size:14px;line-height:14px;color:#000;transform:scaleX(1.0046);transform-origin:left 0;">Light</div>
<div style="left:1240px;top:337px;width:15px;height:16px;background:#22b14c;"></div>
<div style="left:1263px;top:339px;font-size:14px;line-height:14px;color:#000;transform:scaleX(1.0702);transform-origin:left 0;">V</div>
<div style="right:287px;top:339px;font-size:14px;line-height:14px;color:#000;transform:scaleX(1.0397);transform-origin:right 0;">2025-11-28 01:11:25</div>
<div style="right:187px;top:339px;font-size:14px;line-height:14px;color:#000;transform:scaleX(0.9750);transform-origin:right 0;">2461007.55...</div>
<div style="right:87px;top:339px;font-size:14px;line-height:14px;color:#000;transform:scaleX(0.9750);transform-origin:right 0;">2461007.55...</div>
<div style="left:6px;top:379px;width:1687px;height:1px;background:#f0f0f0;"></div>
<svg style="left:11px;top:361px" width="13" height="13"><rect x="0.5" y="0.5" width="12" height="12" fill="#fff" stroke="#333" stroke-width="1"/><path d="M2.5 6.5 L5 9 L10.5 3" fill="none" stroke="#333" stroke-width="1.2"/></svg>
<div style="left:45.5px;top:362px;font-size:14px;line-height:14px;color:#000;transform:scaleX(0.9925);transform-origin:left 0;">D:\temp\Pat\wetransfer_bcq-029-ignored-invalid_2025-11-29_0439\B\eeCep_B_120s_20251128_011347_cal.fit</div>
<div style="right:907px;top:362px;font-size:14px;line-height:14px;color:#000;transform:scaleX(0.8990);transform-origin:right 0;">120</div>
<div style="right:806.5px;top:362px;font-size:14px;line-height:14px;color:#000;transform:scaleX(0.9884);transform-origin:right 0;">-10</div>
<div style="right:737.5px;top:362px;font-size:14px;line-height:14px;color:#000;transform:scaleX(0.9223);transform-origin:right 0;">1 x 1</div>
<div style="right:676.5px;top:362px;font-size:14px;line-height:14px;color:#000;transform:scaleX(0.9629);transform-origin:right 0;">1899</div>
<div style="right:616.5px;top:362px;font-size:14px;line-height:14px;color:#000;transform:scaleX(0.9629);transform-origin:right 0;">1899</div>
<div style="left:1112.5px;top:362px;font-size:14px;line-height:14px;color:#000;transform:scaleX(1.0046);transform-origin:left 0;">Light</div>
<div style="left:1240px;top:360px;width:15px;height:16px;background:#0000ff;"></div>
<div style="left:1263px;top:362px;font-size:14px;line-height:14px;color:#000;transform:scaleX(0.8562);transform-origin:left 0;">B</div>
<div style="right:287px;top:362px;font-size:14px;line-height:14px;color:#000;transform:scaleX(1.0313);transform-origin:right 0;">2025-11-28 01:13:47</div>
<div style="right:187px;top:362px;font-size:14px;line-height:14px;color:#000;transform:scaleX(0.9750);transform-origin:right 0;">2461007.55...</div>
<div style="right:87px;top:362px;font-size:14px;line-height:14px;color:#000;transform:scaleX(0.9750);transform-origin:right 0;">2461007.55...</div>
<div style="left:6px;top:402px;width:1687px;height:1px;background:#f0f0f0;"></div>
<svg style="left:11px;top:384px" width="13" height="13"><rect x="0.5" y="0.5" width="12" height="12" fill="#fff" stroke="#333" stroke-width="1"/><path d="M2.5 6.5 L5 9 L10.5 3" fill="none" stroke="#333" stroke-width="1.2"/></svg>
<div style="left:45.5px;top:385px;font-size:14px;line-height:14px;color:#000;transform:scaleX(0.9954);transform-origin:left 0;">D:\temp\Pat\wetransfer_bcq-029-ignored-invalid_2025-11-29_0439\V\eeCep_V_120s_20251128_011609_cal.fit</div>
<div style="right:907px;top:385px;font-size:14px;line-height:14px;color:#000;transform:scaleX(0.8990);transform-origin:right 0;">120</div>
<div style="right:806.5px;top:385px;font-size:14px;line-height:14px;color:#000;transform:scaleX(0.9884);transform-origin:right 0;">-10</div>
<div style="right:737.5px;top:385px;font-size:14px;line-height:14px;color:#000;transform:scaleX(0.9223);transform-origin:right 0;">1 x 1</div>
<div style="right:676.5px;top:385px;font-size:14px;line-height:14px;color:#000;transform:scaleX(0.9629);transform-origin:right 0;">1899</div>
<div style="right:616.5px;top:385px;font-size:14px;line-height:14px;color:#000;transform:scaleX(0.9629);transform-origin:right 0;">1899</div>
<div style="left:1112.5px;top:385px;font-size:14px;line-height:14px;color:#000;transform:scaleX(1.0046);transform-origin:left 0;">Light</div>
<div style="left:1240px;top:383px;width:15px;height:16px;background:#22b14c;"></div>
<div style="left:1263px;top:385px;font-size:14px;line-height:14px;color:#000;transform:scaleX(1.0702);transform-origin:left 0;">V</div>
<div style="right:287px;top:385px;font-size:14px;line-height:14px;color:#000;transform:scaleX(1.0313);transform-origin:right 0;">2025-11-28 01:16:09</div>
<div style="right:187px;top:385px;font-size:14px;line-height:14px;color:#000;transform:scaleX(0.9750);transform-origin:right 0;">2461007.55...</div>
<div style="right:87px;top:385px;font-size:14px;line-height:14px;color:#000;transform:scaleX(0.9750);transform-origin:right 0;">2461007.55...</div>
<div style="left:6px;top:425px;width:1687px;height:1px;background:#f0f0f0;"></div>
<svg style="left:11px;top:407px" width="13" height="13"><rect x="0.5" y="0.5" width="12" height="12" fill="#fff" stroke="#333" stroke-width="1"/><path d="M2.5 6.5 L5 9 L10.5 3" fill="none" stroke="#333" stroke-width="1.2"/></svg>
<div style="left:45.5px;top:408px;font-size:14px;line-height:14px;color:#000;transform:scaleX(0.9939);transform-origin:left 0;">D:\temp\Pat\wetransfer_bcq-029-ignored-invalid_2025-11-29_0439\V\eeCep_V_120s_20251128_022334_cal.fit</div>
<div style="right:907px;top:408px;font-size:14px;line-height:14px;color:#000;transform:scaleX(0.8990);transform-origin:right 0;">120</div>
<div style="right:806.5px;top:408px;font-size:14px;line-height:14px;color:#000;transform:scaleX(0.9884);transform-origin:right 0;">-10</div>
<div style="right:737.5px;top:408px;font-size:14px;line-height:14px;color:#000;transform:scaleX(0.9223);transform-origin:right 0;">1 x 1</div>
<div style="right:676.5px;top:408px;font-size:14px;line-height:14px;color:#000;transform:scaleX(0.9629);transform-origin:right 0;">1899</div>
<div style="right:616.5px;top:408px;font-size:14px;line-height:14px;color:#000;transform:scaleX(0.9629);transform-origin:right 0;">1899</div>
<div style="left:1112.5px;top:408px;font-size:14px;line-height:14px;color:#000;transform:scaleX(1.0046);transform-origin:left 0;">Light</div>
<div style="left:1240px;top:406px;width:15px;height:16px;background:#22b14c;"></div>
<div style="left:1263px;top:408px;font-size:14px;line-height:14px;color:#000;transform:scaleX(1.0702);transform-origin:left 0;">V</div>
<div style="right:287px;top:408px;font-size:14px;line-height:14px;color:#000;transform:scaleX(1.0313);transform-origin:right 0;">2025-11-28 02:23:34</div>
<div style="right:187px;top:408px;font-size:14px;line-height:14px;color:#000;transform:scaleX(0.9750);transform-origin:right 0;">2461007.60...</div>
<div style="right:87px;top:408px;font-size:14px;line-height:14px;color:#000;transform:scaleX(0.9750);transform-origin:right 0;">2461007.60...</div>
<div style="left:736px;top:150px;width:1px;height:298px;background:#f0f0f0;"></div>
<div style="left:816px;top:150px;width:1px;height:298px;background:#f0f0f0;"></div>
<div style="left:916px;top:150px;width:1px;height:298px;background:#f0f0f0;"></div>
<div style="left:986px;top:150px;width:1px;height:298px;background:#f0f0f0;"></div>
<div style="left:1046px;top:150px;width:1px;height:298px;background:#f0f0f0;"></div>
<div style="left:1106px;top:150px;width:1px;height:298px;background:#f0f0f0;"></div>
<div style="left:1149px;top:150px;width:1px;height:298px;background:#f0f0f0;"></div>
<div style="left:1239px;top:150px;width:1px;height:298px;background:#f0f0f0;"></div>
<div style="left:1289px;top:150px;width:1px;height:298px;background:#f0f0f0;"></div>
<div style="left:1435px;top:150px;width:1px;height:298px;background:#f0f0f0;"></div>
<div style="left:1535px;top:150px;width:1px;height:298px;background:#f0f0f0;"></div>
<div style="left:1635px;top:150px;width:1px;height:298px;background:#f0f0f0;"></div>
<div style="left:1685px;top:150px;width:1px;height:298px;background:#f0f0f0;"></div>
<div style="left:1693px;top:126px;width:17px;height:323px;background:#f0f0f0;"></div>
<div style="left:1693px;top:312px;width:15px;height:119px;background:#cdcdcd;"></div>
<svg style="left:1696px;top:133px" width="9" height="6"><path d="M1 5 L4.5 1.5 L8 5" fill="none" stroke="#606060" stroke-width="2.1"/></svg>
<svg style="left:1696px;top:437px" width="9" height="6"><path d="M1 1 L4.5 4.5 L8 1" fill="none" stroke="#606060" stroke-width="2.1"/></svg>
<div style="left:6px;top:449px;width:1704px;height:16px;background:#f0f0f0;"></div>
<div style="left:24px;top:449px;width:77px;height:15px;background:#cdcdcd;"></div>
<svg style="left:11px;top:453px" width="7" height="8"><path d="M5.5 0.5 L2 4 L5.5 7.5" fill="none" stroke="#606060" stroke-width="2.1"/></svg>
<svg style="left:1680px;top:453px" width="7" height="8"><path d="M1.5 0.5 L5 4 L1.5 7.5" fill="none" stroke="#606060" stroke-width="2.1"/></svg>
<div style="left:1px;top:469px;width:1712px;height:1px;background:#d9d9d9;"></div>
<div style="left:1px;top:476px;width:427px;height:1px;background:#fff;"></div>
<div style="left:1060px;top:476px;width:654px;height:1px;background:#fff;"></div>
<div style="left:1714px;top:476px;width:1px;height:206px;background:#a0a0a0;"></div>
<div style="left:844px;top:473px;width:2px;height:2px;background:#b8b8b8;"></div>
<div style="left:848px;top:473px;width:2px;height:2px;background:#b8b8b8;"></div>
<div style="left:852px;top:473px;width:2px;height:2px;background:#b8b8b8;"></div>
<div style="left:856px;top:473px;width:2px;height:2px;background:#b8b8b8;"></div>
<div style="left:860px;top:473px;width:2px;height:2px;background:#b8b8b8;"></div>
<div style="left:864px;top:473px;width:2px;height:2px;background:#b8b8b8;"></div>
<div style="left:868px;top:473px;width:2px;height:2px;background:#b8b8b8;"></div>
<div style="left:872px;top:473px;width:2px;height:2px;background:#b8b8b8;"></div>
<div style="left:10px;top:485px;width:274px;height:39px;background:#cccccc;border:1px solid #bfbfbf;"></div>
<svg style="left:45px;top:496px" width="17" height="17"><g fill="#cccccc" stroke="#bababa" stroke-width="1"><rect x="0.5" y="0.5" width="9" height="11"/><rect x="3.5" y="2.5" width="9" height="11"/><rect x="6.5" y="4.5" width="9" height="11"/></g><g fill="#666"><rect x="9" y="2" width="1.2" height="1.2"/><rect x="12" y="4" width="1.2" height="1.2"/><rect x="3" y="11" width="1.2" height="1.2"/><rect x="6" y="13" width="1.2" height="1.2"/></g></svg>
<div style="left:65px;top:498px;font-size:14px;line-height:14px;color:#838383;transform:scaleX(0.9297);transform-origin:left 0;">STACK LRGB (Calibration only)</div>
<div style="left:297.5px;top:487px;font-size:14px;line-height:14px;color:#000;transform:scaleX(0.9336);transform-origin:left 0;">Press ESC to abort.</div>
<div style="left:428px;top:486px;width:632px;height:49px;border:1px solid #dcdcdc;"></div>
<div style="left:434px;top:478px;width:70px;height:15px;background:#f0f0f0;"></div>
<div style="left:437.5px;top:479px;font-size:14px;line-height:14px;color:#000;transform:scaleX(0.9381);transform-origin:left 0;">Classify by</div>
<svg style="left:502px;top:501px" width="13" height="13"><rect x="0.5" y="0.5" width="12" height="12" fill="#fff" stroke="#bcbcbc" stroke-width="1"/><path d="M2.5 6.5 L5 9 L10.5 3" fill="none" stroke="#bcbcbc" stroke-width="1.2"/></svg>
<div style="left:519.5px;top:501px;font-size:14px;line-height:14px;color:#6d6d6d;transform:scaleX(1.0049);transform-origin:left 0;height:13px;overflow:hidden;">Light filter</div>
<svg style="left:502px;top:519px" width="13" height="13"><rect x="0.5" y="0.5" width="12" height="12" fill="#fff" stroke="#bcbcbc" stroke-width="1"/></svg>
<div style="left:519.5px;top:519px;font-size:14px;line-height:14px;color:#6d6d6d;transform:scaleX(0.9915);transform-origin:left 0;">Light object</div>
<svg style="left:638px;top:501px" width="13" height="13"><rect x="0.5" y="0.5" width="12" height="12" fill="#fff" stroke="#333" stroke-width="1"/><path d="M2.5 6.5 L5 9 L10.5 3" fill="none" stroke="#333" stroke-width="1.2"/></svg>
<div style="left:655.5px;top:501px;font-size:14px;line-height:14px;color:#000;transform:scaleX(0.9826);transform-origin:left 0;height:13px;overflow:hidden;">Dark exposure duration</div>
<svg style="left:638px;top:519px" width="13" height="13"><rect x="0.5" y="0.5" width="12" height="12" fill="#fff" stroke="#333" stroke-width="1"/></svg>
<div style="left:655.5px;top:519px;font-size:14px;line-height:14px;color:#000;transform:scaleX(0.9679);transform-origin:left 0;">Dark gain</div>
<svg style="left:814px;top:501px" width="13" height="13"><rect x="0.5" y="0.5" width="12" height="12" fill="#fff" stroke="#333" stroke-width="1"/></svg>
<div style="left:831.5px;top:501px;font-size:14px;line-height:14px;color:#000;transform:scaleX(0.9960);transform-origin:left 0;height:13px;overflow:hidden;">Dark temperature</div>
<svg style="left:814px;top:519px" width="13" height="13"><rect x="0.5" y="0.5" width="12" height="12" fill="#fff" stroke="#333" stroke-width="1"/><path d="M2.5 6.5 L5 9 L10.5 3" fill="none" stroke="#333" stroke-width="1.2"/></svg>
<div style="left:831.5px;top:519px;font-size:14px;line-height:14px;color:#000;transform:scaleX(0.9779);transform-origin:left 0;">Flat filter</div>
<div style="left:1089px;top:496px;font-size:20px;line-height:20px;color:#0000ff;transform:scaleX(0.7640);transform-origin:left 0;">?</div>
<svg style="left:1132px;top:489px" width="13" height="13"><rect x="0.5" y="0.5" width="12" height="12" fill="#fff" stroke="#333" stroke-width="1"/></svg>
<div style="left:1149.5px;top:489px;font-size:14px;line-height:14px;color:#000;transform:scaleX(0.9859);transform-origin:left 0;">Power down after completion</div>
<svg style="left:1132px;top:513px" width="13" height="13"><rect x="0.5" y="0.5" width="12" height="12" fill="#fff" stroke="#333" stroke-width="1"/></svg>
<div style="left:1149.5px;top:513px;font-size:14px;line-height:14px;color:#000;transform:scaleX(0.9793);transform-origin:left 0;">Write stack log file</div>
<div style="left:1px;top:539px;width:1714px;height:143px;background:#fff;border-top:2px solid #6b6b6b;border-left:1px solid #6b6b6b;"></div>
<div style="left:1px;top:681px;width:1714px;height:1px;background:#f0f0f0;"></div>
<div style="left:5.5px;top:546px;font-size:14px;line-height:14px;color:#000;transform:scaleX(0.9450);transform-origin:left 0;">16:18:10</div>
<div style="left:66.5px;top:546px;font-size:14px;line-height:14px;color:#000;transform:scaleX(0.9705);transform-origin:left 0;">Photometry calibration for POINT SOURCES successful. 1196 Gaia stars used for flux calibration.  Flux aperture diameter: 5.90 pixels. Standard error MZERO [magn]: 0.002%. Annulus inner diameter: 21 pixels. Stars with pixel values close to 67186 are ignored.</div>
<div style="left:5.5px;top:565px;font-size:14px;line-height:14px;color:#000;transform:scaleX(0.9450);transform-origin:left 0;">16:18:10</div>
<div style="left:66.5px;top:565px;font-size:14px;line-height:14px;color:#000;transform:scaleX(0.9835);transform-origin:left 0;">Photometric calibration is only valid if the filter passband (V) is compatible with the passband reference database (V). This is indicated by the coloured square icons in tab photometry.</div>
<div style="left:5.5px;top:584px;font-size:14px;line-height:14px;color:#000;transform:scaleX(0.9450);transform-origin:left 0;">16:18:10</div>
<div style="left:66.5px;top:584px;font-size:14px;line-height:14px;color:#000;transform:scaleX(0.9964);transform-origin:left 0;">Limiting magnitude is 14.35 ( σ=0.0019, SNR=7, aperture Ø1.8) Saturation at ≈ 9.0</div>
<div style="left:5.5px;top:603px;font-size:14px;line-height:14px;color:#000;transform:scaleX(0.9450);transform-origin:left 0;">16:18:10</div>
<div style="left:66.5px;top:603px;font-size:14px;line-height:14px;color:#000;transform:scaleX(0.9917);transform-origin:left 0;">Detected a total 78 stars</div>
<div style="left:5.5px;top:622px;font-size:14px;line-height:14px;color:#000;transform:scaleX(0.9450);transform-origin:left 0;">16:18:10</div>
<div style="left:66.5px;top:622px;font-size:14px;line-height:14px;color:#000;transform:scaleX(0.9961);transform-origin:left 0;">Gaia online with database transformation as set in tab Photometry. Filter=V. Online Gaia -&gt;V</div>
<div style="left:5.5px;top:641px;font-size:14px;line-height:14px;color:#000;transform:scaleX(0.9450);transform-origin:left 0;">16:18:10</div>
<div style="left:66.5px;top:641px;font-size:14px;line-height:14px;color:#000;transform:scaleX(0.9759);transform-origin:left 0;">Measurements completed.</div>
<div style="left:1697px;top:542px;width:16px;height:137px;background:#f0f0f0;"></div>
<div style="left:1697px;top:646px;width:15px;height:17px;background:#cdcdcd;"></div>
<svg style="left:1700px;top:549px" width="9" height="6"><path d="M1 5 L4.5 1.5 L8 5" fill="none" stroke="#606060" stroke-width="2.1"/></svg>
<svg style="left:1700px;top:669px" width="9" height="6"><path d="M1 1 L4.5 4.5 L8 1" fill="none" stroke="#606060" stroke-width="2.1"/></svg>
<div style="left:0px;top:31px;width:1px;height:652px;background:#0078d7;"></div>
<div style="left:1715px;top:31px;width:1px;height:652px;background:#0078d7;"></div>
<div style="left:0px;top:682px;width:1716px;height:1px;background:#0078d7;"></div>
<div style="left:205px;top:64px;width:256px;height:27px;background:#cce4f7;border:1px solid #0078d7;"></div>
<div style="left:209.5px;top:70px;font-size:14px;line-height:14px;color:#000;transform:scaleX(0.9759);transform-origin:left 0;">Measure all annotated.</div>
<div style="left:361.5px;top:70px;font-size:14px;line-height:14px;color:#000;transform:scaleX(0.8480);transform-origin:left 0;">SNR&gt;</div>
<svg style="left:448px;top:75px" width="9" height="6"><path d="M0.5 0.7 L4.5 4.7 L8.5 0.7" fill="none" stroke="#333" stroke-width="1.15"/></svg>
<div style="left:207px;top:93px;width:256px;height:58px;background:rgba(0,0,0,0.25);"></div>
<div style="left:205px;top:91px;width:256px;height:59px;background:#fff;border:1px solid #0078d7;"></div>
<div style="left:208px;top:95px;font-size:14px;line-height:14px;color:#000;transform:scaleX(0.9789);transform-origin:left 0;">Manual star selection</div>
<div style="left:206px;top:111px;width:254px;height:19px;background:#0078d7;"></div>
<div style="left:208px;top:114px;font-size:14px;line-height:14px;color:#fff;transform:scaleX(0.9829);transform-origin:left 0;">Measure all annotated.</div>
<div style="left:360.5px;top:114px;font-size:14px;line-height:14px;color:#fff;transform:scaleX(0.8613);transform-origin:left 0;">SNR&gt;</div>
<div style="left:208px;top:133px;font-size:14px;line-height:14px;color:#000;transform:scaleX(0.9549);transform-origin:left 0;">Measure all stars.</div>
<div style="left:330.5px;top:133px;font-size:14px;line-height:14px;color:#000;transform:scaleX(0.8613);transform-origin:left 0;">SNR&gt;</div>
<div style="left:194px;top:58px;width:351px;height:98px;border:5px solid #ed1c24;border-radius:13px;"></div>
</body></html>
